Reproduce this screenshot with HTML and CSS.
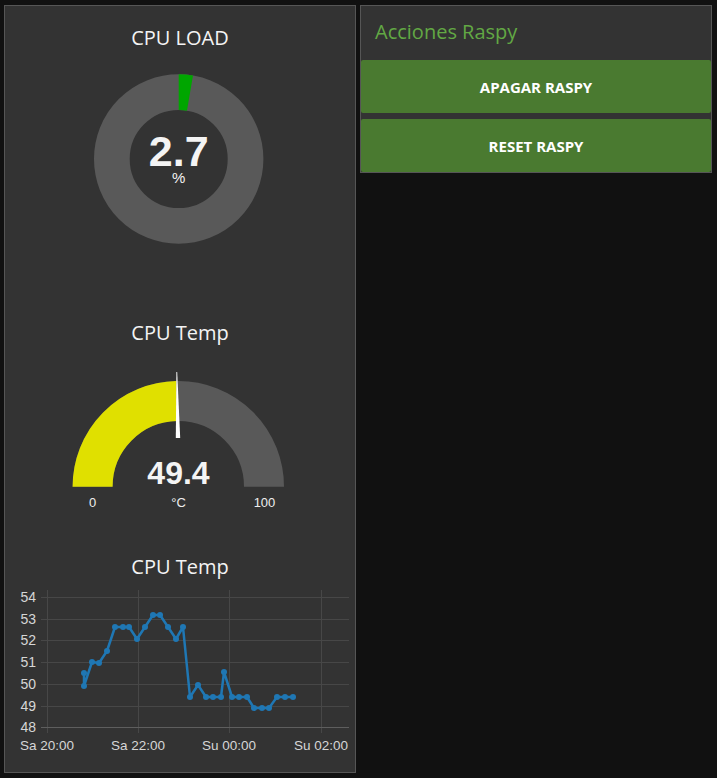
FILE: index.html
```html
<!DOCTYPE html>
<html>
<head>
<meta charset="utf-8">
<link rel="stylesheet" href="styles.css">
</head>
<body>
<div class="layout">
  <div class="card card-left">
    <section class="widget w-load">
      <h2 class="w-title">CPU LOAD</h2>
      <svg class="w-svg" width="350" height="170" viewBox="5 74 350 170">
        <circle cx="178.7" cy="159" r="66.85" fill="none" stroke="#595959" stroke-width="35.7"/>
        <circle cx="178.7" cy="159" r="66.85" fill="none" stroke="#00a600" stroke-width="35.7"
          stroke-dasharray="11.34 500" transform="rotate(-90 178.7 159)"/>
        <text x="178.7" y="166" class="big-val" font-size="43">2.7</text>
        <text x="178.7" y="183" class="unit" font-size="15">%</text>
      </svg>
    </section>
    <section class="widget w-gauge">
      <h2 class="w-title">CPU Temp</h2>
      <svg class="w-svg" width="350" height="170" viewBox="5 345 350 170">
        <path d="M 92.6 486.7 A 85.7 85.7 0 0 1 264 486.7" fill="none" stroke="#595959" stroke-width="40"/>
        <path d="M 92.6 486.7 A 85.7 85.7 0 0 1 176.69 401.02" fill="none" stroke="#e0e000" stroke-width="40"/>
        <polygon points="176.4,372 177.2,372 180.2,438 175.8,438" fill="#ffffff"/>
        <text x="178.5" y="484" class="big-val" font-size="32">49.4</text>
        <text x="92.5" y="507" class="g-lbl">0</text>
        <text x="178.5" y="507" class="g-lbl">°C</text>
        <text x="264.5" y="507" class="g-lbl">100</text>
      </svg>
    </section>
    <section class="widget w-chart">
      <h2 class="w-title">CPU Temp</h2>
      <svg class="w-svg" width="350" height="185" viewBox="5 579 350 185">
        <g stroke="#474747" stroke-width="1">
          <line x1="41" y1="597.5" x2="349" y2="597.5"/>
          <line x1="41" y1="619.5" x2="349" y2="619.5"/>
          <line x1="41" y1="640.5" x2="349" y2="640.5"/>
          <line x1="41" y1="662.5" x2="349" y2="662.5"/>
          <line x1="41" y1="684.5" x2="349" y2="684.5"/>
          <line x1="41" y1="706.5" x2="349" y2="706.5"/>
          <line x1="47.5" y1="590" x2="47.5" y2="733"/>
          <line x1="138.5" y1="590" x2="138.5" y2="733"/>
          <line x1="229.5" y1="590" x2="229.5" y2="733"/>
          <line x1="321.5" y1="590" x2="321.5" y2="733"/>
        </g>
        <line x1="41" y1="727.5" x2="349" y2="727.5" stroke="#5e5e5e" stroke-width="1"/>
        <g class="ax-y">
          <text x="36" y="602">54</text>
          <text x="36" y="624">53</text>
          <text x="36" y="645">52</text>
          <text x="36" y="667">51</text>
          <text x="36" y="689">50</text>
          <text x="36" y="711">49</text>
          <text x="36" y="732">48</text>
        </g>
        <g class="ax-x">
          <text x="47" y="750">Sa 20:00</text>
          <text x="138" y="750">Sa 22:00</text>
          <text x="229" y="750">Su 00:00</text>
          <text x="321" y="750">Su 02:00</text>
        </g>
        <polyline fill="none" stroke="#1f77b4" stroke-width="2.5" stroke-linejoin="round"
          points="84,673 84,686 92,662 99,663 107,651 115,627 123,627 129,627 137,639 145,627 153,615 160,615 168,627 176,639 183,627 190,697 198,685 206,697 213,697 221,697 224,672 232,697 239,697 247,697 254,708 262,708 269,708 277,697 285,697 293,697"/>
        <g fill="#1f77b4">
          <circle cx="84" cy="673" r="3"/><circle cx="84" cy="686" r="3"/><circle cx="92" cy="662" r="3"/>
          <circle cx="99" cy="663" r="3"/><circle cx="107" cy="651" r="3"/><circle cx="115" cy="627" r="3"/>
          <circle cx="123" cy="627" r="3"/><circle cx="129" cy="627" r="3"/><circle cx="137" cy="639" r="3"/>
          <circle cx="145" cy="627" r="3"/><circle cx="153" cy="615" r="3"/><circle cx="160" cy="615" r="3"/>
          <circle cx="168" cy="627" r="3"/><circle cx="176" cy="639" r="3"/><circle cx="183" cy="627" r="3"/>
          <circle cx="190" cy="697" r="3"/><circle cx="198" cy="685" r="3"/><circle cx="206" cy="697" r="3"/>
          <circle cx="213" cy="697" r="3"/><circle cx="221" cy="697" r="3"/><circle cx="224" cy="672" r="3"/>
          <circle cx="232" cy="697" r="3"/><circle cx="239" cy="697" r="3"/><circle cx="247" cy="697" r="3"/>
          <circle cx="254" cy="708" r="3"/><circle cx="262" cy="708" r="3"/><circle cx="269" cy="708" r="3"/>
          <circle cx="277" cy="697" r="3"/><circle cx="285" cy="697" r="3"/><circle cx="293" cy="697" r="3"/>
        </g>
      </svg>
    </section>
  </div>
  <div class="card card-right">
    <h2 class="group-title">Acciones Raspy</h2>
    <div class="btn-list">
      <button class="btn">APAGAR RASPY</button>
      <button class="btn">RESET RASPY</button>
    </div>
  </div>
</div>
</body>
</html>
```
FILE: styles.css
```css
html, body {
  margin: 0;
  padding: 0;
  background: #111111;
  font-family: "Open Sans", "Noto Sans", Arial, sans-serif;
}

.layout {
  display: flex;
  align-items: flex-start;
  gap: 4px;
  padding: 5px 4px;
}

.card {
  box-sizing: border-box;
  width: 352px;
  background: #333333;
  border: 1px solid #565656;
}

.card-left {
  height: 768px;
  display: flex;
  flex-direction: column;
}

.widget {
  display: flex;
  flex-direction: column;
  align-items: center;
}

.w-load { height: 294px; padding-top: 20px; box-sizing: border-box; }
.w-gauge { height: 240px; padding-top: 21px; box-sizing: border-box; }
.w-chart { height: 231px; padding-top: 15px; box-sizing: border-box; }

.w-title {
  margin: 0;
  font-size: 20px;
  line-height: 24px;
  font-weight: 500;
  color: #f4f4f4;
}

.w-load .w-svg { margin-top: 24px; }

.w-svg { display: block; }

.big-val {
  font-family: "Liberation Sans", Arial, sans-serif;
  font-weight: 700;
  fill: #f4f4f4;
  text-anchor: middle;
}

.unit {
  font-family: "Liberation Sans", Arial, sans-serif;
  fill: #f4f4f4;
  text-anchor: middle;
}

.g-lbl {
  font-family: "Liberation Sans", Arial, sans-serif;
  font-size: 13px;
  fill: #eeeeee;
  text-anchor: middle;
}

.ax-y text {
  font-family: "Liberation Sans", Arial, sans-serif;
  font-size: 14px;
  fill: #d6d6d6;
  text-anchor: end;
}

.ax-x text {
  font-family: "Liberation Sans", Arial, sans-serif;
  font-size: 13.5px;
  fill: #d6d6d6;
  text-anchor: middle;
}

.card-right {
  height: 168px;
  display: flex;
  flex-direction: column;
}

.group-title {
  margin: 0;
  height: 54px;
  box-sizing: border-box;
  padding: 14px 0 0 14px;
  font-size: 20px;
  line-height: 24px;
  font-weight: 500;
  color: #62a844;
}

.btn-list {
  display: flex;
  flex-direction: column;
  gap: 6px;
}

.btn {
  display: block;
  width: 100%;
  height: 53px;
  margin: 0;
  border: none;
  border-radius: 2px;
  background: #4a7a30;
  color: #ffffff;
  font-family: "Open Sans", "Noto Sans", Arial, sans-serif;
  font-size: 15px;
  font-weight: 700;
  cursor: pointer;
}
```
